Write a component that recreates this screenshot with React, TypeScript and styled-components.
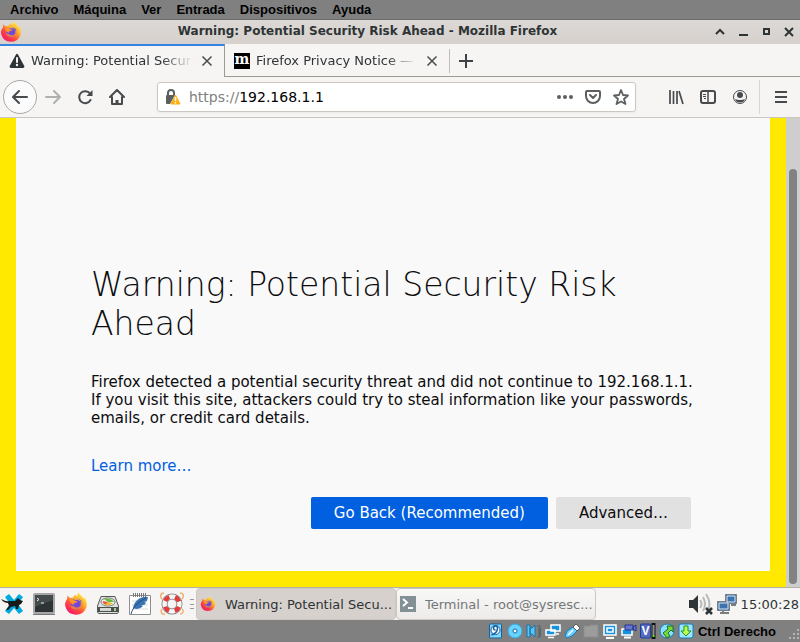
import React from 'react';
import styled, { createGlobalStyle } from 'styled-components';

const GlobalStyle = createGlobalStyle`
  *, *::before, *::after { box-sizing: border-box; }
  body { margin: 0; font-family: "DejaVu Sans", sans-serif; }
  button, input { font: inherit; color: inherit; margin: 0; }
  button { border: 0; padding: 0; background: none; cursor: pointer; }
  svg { display: block; flex: none; }
  h1, p { margin: 0; }
`;

const Screen = styled.div`
  min-height: 100vh;
  display: flex;
  flex-direction: column;
  background: #808080;
`;

/* Virtual machine menu */
const HostMenu = styled.nav`
  display: flex;
  gap: 15px;
  height: 20px;
  padding: 0 10px;
  align-items: center;
  border-bottom: 1px solid #6d6b6a;
  font: bold 13px "Liberation Sans", sans-serif;
`;
const HostMenuItem = styled.button`
  line-height: 18px;
`;

/* Window title */
const TitleBar = styled.header`
  display: flex;
  align-items: center;
  height: 24px;
  padding-right: 4px;
  background: linear-gradient(#dcd8d5, #d6d1cd);
  color: #2e3436;
`;
const WindowTitle = styled.div`
  flex: 1;
  text-align: center;
  font-size: 12px;
  line-height: 20px;
  font-weight: bold;
  padding-bottom: 2px;
  white-space: nowrap;
`;
const WindowControls = styled.div`
  display: flex;
  gap: 9px;
`;
const WindowButton = styled.button`
  width: 14px;
  height: 14px;
`;

/* Tabs */
const TabStrip = styled.div`
  display: flex;
  height: 33px;
  background: #f6f5f4;
  box-shadow: inset 0 -1px #9b9b92;
  color: #2e3436;
`;
const TabBox = styled.div<{ $active?: boolean }>`
  flex: 0 1 ${p => (p.$active ? '225px' : '224px')};
  min-width: 0;
  display: flex;
  align-items: center;
  gap: 6px;
  padding: 0 9px 2px;
  border-top: ${p => (p.$active ? '2px solid #3584e4' : '2px solid transparent')};
  border-right: ${p => (p.$active ? '1px solid #9b9b92' : '0')};
  background: ${p => (p.$active ? '#f6f5f4' : 'transparent')};
`;
const TabLabel = styled.button`
  flex: 1;
  min-width: 0;
  overflow: hidden;
  white-space: nowrap;
  text-align: left;
  font-size: 13px;
  line-height: 20px;
  mask-image: linear-gradient(to left, transparent, #000 32px);
`;
const NewTab = styled.button`
  margin: 5px 0 4px;
  padding: 0 8px;
  border-left: 1px solid #bdbcb9;
`;
const MozillaMark = styled.span`
  flex: none;
  width: 16px;
  height: 16px;
  background: #000;
  color: #fff;
  text-align: center;
  font: bold 14px/13px "DejaVu Serif", serif;
`;

/* Navigation */
const NavBar = styled.div`
  display: flex;
  align-items: center;
  height: 41px;
  padding: 0 11px 0 3px;
  background: #f6f5f4;
  border-bottom: 1px solid #c9c5c1;
  color: #474b4d;
`;
const BackButton = styled.button`
  width: 34px;
  height: 34px;
  border: 1px solid #aaa7a4;
  border-radius: 50%;
  background: #fbfbfb;
  display: grid;
  place-items: center;
`;
const ToolButton = styled.button<{ $faded?: boolean }>`
  width: 32px;
  height: 32px;
  display: grid;
  place-items: center;
  opacity: ${p => (p.$faded ? 0.4 : 1)};
`;
const AddressBar = styled.div`
  flex: 1;
  min-width: 0;
  height: 30px;
  margin: 0 24px;
  padding: 0 0 0 7px;
  display: flex;
  align-items: center;
  border: 1px solid #cdc7c2;
  border-radius: 3px;
  background: #fff;
  box-shadow: 0 1px 3px #0000000d;
  font-size: 14px;
`;
const Scheme = styled.label`
  margin-left: 8px;
  color: #808080;
`;
const AddressInput = styled.input`
  flex: 1;
  min-width: 0;
  border: 0;
  padding: 0;
  outline: 0;
  color: #000;
  background: transparent;
`;
const AddressButton = styled.button`
  width: 28px;
  height: 28px;
  display: grid;
  place-items: center;
  color: #5c5f60;
`;
const MenuButton = styled.button`
  margin-left: 3px;
  padding-left: 13px;
  height: 34px;
  display: flex;
  align-items: center;
  border-left: 1px solid #d6d5d4;
`;

/* Page */
const Viewport = styled.main`
  flex: 1;
  display: flex;
  background: #ffe900;
`;
const Page = styled.section`
  flex: 1;
  margin: 0 16px 16px;
  padding: 147px 75px 42px;
  background: #f9f9fa;
  color: #0c0c0d;
  font-size: 15px;
  line-height: 18px;
`;
const Heading = styled.h1`
  font-size: 33px;
  line-height: 39px;
  font-weight: 200;
`;
const Message = styled.p`
  margin: 30px 0;
`;
const LearnMore = styled.a`
  color: #0060df;
  text-decoration: none;
`;
const Actions = styled.div`
  display: flex;
  justify-content: flex-end;
  gap: 8px;
  margin-top: 22px;
  padding-right: 4px;
`;
const ActionButton = styled.button<{ $primary?: boolean }>`
  height: 32px;
  padding: 0 23px;
  border-radius: 2px;
  background: ${p => (p.$primary ? '#0060df' : '#e1e1e2')};
  color: ${p => (p.$primary ? '#fff' : '#0c0c0d')};
`;
const ScrollTrack = styled.div`
  width: 14px;
  padding: 51px 3px 3px;
  display: flex;
  background: #cecece;
`;
const ScrollThumb = styled.div`
  flex: 1;
  border-radius: 4px;
  background: #7f8382;
`;

/* Desktop panel */
const Panel = styled.footer`
  display: flex;
  align-items: center;
  height: 33px;
  border-top: 1px solid #b5b1a5;
  background: #f6f5f4;
  color: #2e3436;
`;
const Launchers = styled.div`
  display: flex;
  gap: 8px;
`;
const Launcher = styled.button`
  width: 24px;
  height: 24px;
`;
const Grip = styled.div`
  width: 4px;
  height: 10px;
  margin: 0 2px 0 6px;
  border: solid #97999a;
  border-width: 1px 0;
  background: linear-gradient(#97999a, #97999a) center / 4px 1px no-repeat;
`;
const Task = styled.button<{ $active?: boolean }>`
  flex: 0 1 200px;
  min-width: 0;
  height: 32px;
  display: flex;
  align-items: center;
  gap: 9px;
  padding: 0 3px;
  border: 1px solid #cdc7c2;
  border-radius: 4px;
  background: ${p => (p.$active ? '#d6d1cd' : 'linear-gradient(#f8f8f7, #edebe9)')};
  color: ${p => (p.$active ? '#2e3436' : '#747778')};
  font-size: 13px;
`;
const TaskLabel = styled.span`
  overflow: hidden;
  white-space: nowrap;
`;
const Tray = styled.div`
  margin-left: auto;
  padding-right: 1px;
  display: flex;
  align-items: center;
  gap: 3px;
  font-size: 13px;
`;

/* Virtual machine status */
const HostStatus = styled.div`
  display: flex;
  align-items: center;
  justify-content: flex-end;
  gap: 3px;
  height: 22px;
  font: bold 13px "Liberation Sans", sans-serif;
`;
const HostKey = styled.span`
  margin: 0 7px 0 1px;
`;

const FirefoxIcon = ({ size = 24 }: { size?: number }) => (
  <svg width={size} height={size} viewBox="0 0 24 24" aria-hidden="true">
    <defs>
      <linearGradient id="flame" x1=".85" y1=".1" x2=".2" y2=".95">
        <stop offset="0" stopColor="#fff44f" /><stop offset=".35" stopColor="#ffab25" />
        <stop offset=".65" stopColor="#ff4a3d" /><stop offset="1" stopColor="#f5156c" />
      </linearGradient>
      <linearGradient id="tail" x1="0" y1="0" x2="0" y2="1">
        <stop offset="0" stopColor="#ffdf3a" /><stop offset="1" stopColor="#ff7a30" />
      </linearGradient>
      <radialGradient id="globe"><stop offset="0" stopColor="#9059ff" /><stop offset="1" stopColor="#5b4ccc" /></radialGradient>
    </defs>
    <path fill="url(#flame)" d="M3.2 7 3.5 3.5 6 6l3-.5C10 3.5 11 3 12 2.700l.6 2.100C14 3 13.500 1.500 14.500.4c1 2.600 3.400 3 5.200 6l1-.9c2 3.200 2.700 6.700 1.600 10A11 11 0 0 1 1.500 15C.6 12 1.200 9.600 3.200 7Z" />
    <circle cx="12.5" cy="12" r="5.7" fill="url(#globe)" />
    <path fill="url(#tail)" d="M14.5.4c.7 3.4 5.3 5.1 5 10.7-.2 4-3.3 6.6-6.9 6.6-3.4 0-5.8-1.8-6.3-4.8 2.1 1.8 4.5 1.6 5.5-.1l-3-.9c-1.3-.5-1.4-1.5-.8-2.6 1-1 2-.6 2.9-.8-.6-1.1-2-1.6-4.3-1.3C7.7 5.8 10.6 5.1 13 6.1c3 1.2 4 3.3 3.6 5.2C18.7 8.6 16.9 5.7 15 4c-.9-1.1-1-2.3-.5-3.6Z" opacity=".85" />
    <circle cx="12.9" cy="11.7" r="3.8" fill="#7148d8" />
    <path fill="#ff932e" d="M5.2 7.1c2.3-.5 4.2.2 5.5 1.8l2.700.3c0 1.200-1.500 1.500-3.100 2.100-.8.3-.7 1.200-.1 1.700-2.800-.4-4.800-2.700-5-5.900Z" />
  </svg>
);

const Close = () => (
  <svg width="16" height="16" viewBox="0 0 16 16" fill="none" stroke="#484c4e" strokeWidth="1.5"><path d="m3.5 3.5 9 9m0-9-9 9" /></svg>
);

const TerminalMini = () => (
  <svg width="16" height="16" viewBox="0 0 16 16"><path fill="#839197" d="M0 0h16v16H0z" /><path d="m3 3 4 3.500L3 10m5 2h5" fill="none" stroke="#fff" strokeWidth="2" /></svg>
);

const Tab = ({ active, icon, title }: { active?: boolean; icon: React.ReactNode; title: string }) => (
  <TabBox $active={active}>
    {icon}
    <TabLabel>{title}</TabLabel>
    <button aria-label={`Close ${title}`}><Close /></button>
  </TabBox>
);

const launchers = [
  { name: 'Applications', art: (
    <svg width="24" height="24" viewBox="0 0 24 24"><path fill="#00a9e0" d="m5 5 4-3 5 6 5-6 4 3-5 7 5 7-4 3-5-6-5 6-4-3 5-7Z" /><path fill="#171a1b" d="M1 7c3 1 5 3 8 2h6l3-3 2 2 3 1-2 3-2 1-1 4h-2l-1-3-4 1-3 3H6l3-4-1-3c-2 0-5-1-7-4Z" /></svg>
  ) },
  { name: 'Terminal', art: (
    <svg width="24" height="24" viewBox="0 0 24 24"><rect x="2" y="2" width="20" height="19" rx="1" fill="#2e3435" stroke="#a6a6a6" strokeWidth="2" /><path fill="#444b4d" d="M3 3h18v5L3 15Z" /><path d="m5 6 2 1.500L5 9m4 2h3" stroke="#eee" fill="none" /><path d="M1 22.500h22" stroke="#777" /></svg>
  ) },
  { name: 'Firefox', art: <FirefoxIcon /> },
  { name: 'Disk usage', art: (
    <svg width="24" height="24" viewBox="0 0 24 24"><path fill="#dfe1df" stroke="#555a57" d="M5 4.500h14L22.500 14v6l-1 1.500h-19l-1-1.500v-6Z" /><path fill="#4a504d" d="M2 15h20v5H2Z" /><path fill="#d6d8d5" d="M4 16h11v3H4z" /><ellipse cx="12" cy="10" rx="7" ry="4" fill="#f9f9f7" stroke="#777d79" /><path fill="#65bb3c" d="M12 10 8 7c3-1 9 0 10 3Z" /><path fill="#e85937" d="m12 10-5-1c-1 1 0 3 3 4Z" /><path fill="#f3b63c" d="m12 10-3 3c3 1 6 0 8-2Z" /><path fill="#a9c99b" d="M18 16h2v3h-2z" /></svg>
  ) },
  { name: 'Text editor', art: (
    <svg width="24" height="24" viewBox="0 0 24 24"><path fill="#fff" stroke="#8e9090" d="M1.500 3.500h21v19h-21Z" /><path d="M5.500 1v4m2-4v4m2-4v4m2-4v4m2-4v4m2-4v4m2-4v4" stroke="#777" /><path d="M4 9h15M4 13h16M4 17h16" stroke="#d7dcdf" /><path fill="#3974b0" d="M20 5c-6-1-13 2-15 11l3 1c3 0 5-1 7-3l-2-.5 4-1 1-2-2-.5 3-1Z" /><path d="M3 22c2-7 7-12 15-16" fill="none" stroke="#244d7e" /></svg>
  ) },
  { name: 'Help', art: (
    <svg width="24" height="24" viewBox="0 0 24 24"><g fill="none"><path d="M4 1C0 1 0 5 2 7m18-6c4 0 4 4 2 6M2 17c-2 3 0 6 3 5m15 0c3 0 4-3 2-5" stroke="#edb273" strokeWidth="1.5" /><circle cx="12" cy="12" r="7.5" stroke="#777" strokeWidth="6" /><circle cx="12" cy="12" r="7.5" stroke="#f6f6f4" strokeWidth="4.500" /><circle cx="12" cy="12" r="7.5" stroke="#e13b3b" strokeWidth="4.500" strokeDasharray="5.890 5.890" strokeDashoffset="-2.950" /></g></svg>
  ) },
];

const blue = '#1593df';
const statusArt = [
  <><rect x="1.5" y="1" width="12" height="14" rx="1" fill="#80d8ff" stroke="#155fa0" /><circle cx="7.5" cy="7" r="4.5" fill="#fff" stroke="#155fa0" /><path d="M7.5 7a2 2 0 1 1 2-2c0 4-3 6-6 7" fill="none" stroke="#155fa0" strokeWidth="1.5" /></>,
  <><circle cx="8" cy="8" r="7" fill="#68d3ff" stroke="#35a6e0" /><circle cx="8" cy="8" r="2" fill="#fff" stroke="#0c67a4" /></>,
  <><path fill="#55c7fa" stroke="#1c72a9" d="M1 2h3v12H1zM4 5h2l3-3v12l-3-3H4z" /><path d="M11 3h3v11h-3m1-8h3m-3 2h3m-3 2h3m-3 2h3" fill="none" stroke="#555f63" /></>,
  <><path fill={blue} stroke="#fff" strokeWidth="1.5" d="M6 2h9v6H6zM1 7h9v5H1z" /><path d="M11 11h3M3 14.500h6" stroke="#fff" strokeWidth="1.5" /></>,
  <><path fill="#67ceff" stroke="#147bbd" d="m9 4 4 4-5 5-5 2-2-2 2-5Z" /><path fill="#fff" stroke="#444" strokeWidth=".8" d="m9 4 3-3 4 4-3 3Z" /><path d="m4 12 5-5" stroke="#fff" strokeWidth="1.5" /></>,
  <path fill="#9c9c9c" stroke="#8b8b8b" d="M1 3h6l1-1h7v12H1Z" />,
  <><path fill={blue} stroke="#fff" strokeWidth="1.5" d="M2 2h12v10H2Z" /><path d="M5 5h6v4H5Z" fill="none" stroke="#fff" strokeWidth="1.5" /><path d="M4 15h8" stroke="#fff" strokeWidth="2" /></>,
  <><path fill={blue} stroke="#fff" strokeWidth="1.5" d="M1 6h10v6H1Z" /><path d="M3 14.500h7" stroke="#fff" strokeWidth="2" /><path fill="#6974cd" stroke="#24368f" d="M4 2h8v5H4Zm8 2 3-2v6l-3-2Z" /></>,
  <><rect x="0.5" y="1" width="10" height="14" rx="1" fill="#526bc1" stroke="#253e91" /><text x="5.5" y="12" textAnchor="middle" fontSize="12" fill="#fff">V</text><path d="M13.5 0v16" stroke="#111" strokeWidth="4" /><path d="M13.5 2v10" stroke="#929292" strokeWidth="2" /><path d="M13.5 12v2" stroke="#56ee12" strokeWidth="2" /></>,
  <><circle cx="8" cy="8" r="7" fill="#8ae0ff" stroke="#197cae" /><path fill="#79d735" stroke="#18732b" d="M8 3h6v6l-2-2-3 3 2 3-3 2-4-5 5-4Z" /></>,
  <><rect x="1" y="1" width="14" height="14" rx="2" fill="#9de5ff" stroke="#127db8" /><path fill="#b7ff50" stroke="#279022" d="M6 3h4v5h3l-5 5-5-5h3Z" /></>,
];

export default function App() {
  return (
    <Screen>
      <GlobalStyle />
      <HostMenu>
        {['Archivo', 'Máquina', 'Ver', 'Entrada', 'Dispositivos', 'Ayuda'].map(name => <HostMenuItem key={name}>{name}</HostMenuItem>)}
      </HostMenu>
      <TitleBar>
        <FirefoxIcon size={22} />
        <WindowTitle>Warning: Potential Security Risk Ahead - Mozilla Firefox</WindowTitle>
        <WindowControls>
          {['m3 9 4-4 4 4', 'M3 10h9', 'M5 4h5v5H5Z', 'm3 3 8 8m0-8-8 8'].map((d, i) => (
            <WindowButton key={d} aria-label={['Shade', 'Minimize', 'Maximize', 'Close window'][i]}>
              <svg width="14" height="14" viewBox="0 0 14 14" fill="none" stroke="#2e3436" strokeWidth="2"><path d={d} /></svg>
            </WindowButton>
          ))}
        </WindowControls>
      </TitleBar>
      <TabStrip>
        <Tab active title="Warning: Potential Security Risk Ahead" icon={
          <svg width="16" height="16" viewBox="0 0 16 16"><path fill="#2e3436" d="M7 1.5a1.2 1.2 0 0 1 2 0l6 11A1.5 1.5 0 0 1 13.7 15H2.3A1.5 1.5 0 0 1 1 12.5Z" /><path d="M8 5v4" stroke="#f6f5f4" strokeWidth="2" strokeLinecap="round" /><circle cx="8" cy="12" r="1.2" fill="#f6f5f4" /></svg>
        } />
        <Tab title="Firefox Privacy Notice — Mozilla" icon={<MozillaMark aria-hidden="true">m</MozillaMark>} />
        <NewTab aria-label="New tab"><svg width="16" height="16" viewBox="0 0 16 16" stroke="#3e4345" strokeWidth="2"><path d="M8 1v14M1 8h14" /></svg></NewTab>
      </TabStrip>
      <NavBar>
        <BackButton aria-label="Back"><svg width="16" height="16" viewBox="0 0 16 16" fill="none" stroke="#474b4d" strokeWidth="2" strokeLinecap="round" strokeLinejoin="round"><path d="M15 8H1m6-6L1 8l6 6" /></svg></BackButton>
        <ToolButton $faded aria-label="Forward"><svg width="16" height="16" viewBox="0 0 16 16" fill="none" stroke="currentColor" strokeWidth="2" strokeLinecap="round" strokeLinejoin="round"><path d="M1 8h14M9 2l6 6-6 6" /></svg></ToolButton>
        <ToolButton aria-label="Reload"><svg width="16" height="16" viewBox="0 0 16 16" fill="none" stroke="currentColor" strokeWidth="2"><path d="M13 4.5A6 6 0 1 0 13.5 11" strokeLinecap="round" /><path fill="currentColor" stroke="none" d="M15.5 1v6h-6Z" /></svg></ToolButton>
        <ToolButton aria-label="Home"><svg width="16" height="16" viewBox="0 0 16 16" fill="none" stroke="currentColor" strokeWidth="2" strokeLinecap="round" strokeLinejoin="round"><path d="m1 8 7-7 7 7M3 8v7h10V8" /><path d="M8 15v-4" strokeWidth="3" strokeLinecap="butt" /></svg></ToolButton>
        <AddressBar>
          <svg width="16" height="16" viewBox="0 0 16 16"><path d="M3 7V4a3 3 0 0 1 6 0v2" fill="none" stroke="#5b5f60" strokeWidth="2" /><path fill="#5b5f60" d="M2 6h8l-5 9H2a1 1 0 0 1-1-1V7a1 1 0 0 1 1-1Z" /><path fill="#ffad0d" stroke="#ffad0d" strokeLinejoin="round" d="m10.5 6 4.500 9H6Z" /><path d="M10.5 8v4m0 1v1.5" stroke="#fff" strokeWidth="1.5" /></svg>
          <Scheme htmlFor="address">https://</Scheme>
          <AddressInput id="address" defaultValue="192.168.1.1" />
          <AddressButton aria-label="Page actions"><svg width="16" height="16" viewBox="0 0 16 16" fill="currentColor"><circle cx="2" cy="8" r="2" /><circle cx="8" cy="8" r="2" /><circle cx="14" cy="8" r="2" /></svg></AddressButton>
          <AddressButton aria-label="Save to Pocket"><svg width="16" height="16" viewBox="0 0 16 16" fill="none" stroke="currentColor" strokeWidth="2" strokeLinejoin="round" strokeLinecap="round"><path d="M2 2h12q1 0 1 1v4A7 7 0 0 1 1 7V3q0-1 1-1Zm3 4 3 3 3-3" /></svg></AddressButton>
          <AddressButton aria-label="Bookmark"><svg width="16" height="16" viewBox="0 0 16 16" fill="none" stroke="currentColor" strokeWidth="1.8" strokeLinejoin="round"><path d="m8 1 2 5 5 .5-4 3.500 1.500 5L8 12.500 3.500 15 5 10 1 6.500 6 6Z" /></svg></AddressButton>
        </AddressBar>
        <ToolButton aria-label="Library"><svg width="16" height="16" viewBox="0 0 16 16" fill="none" stroke="currentColor" strokeWidth="2"><path d="M2 1v14M5.500 2v13M9 2v13" strokeWidth="1.700" /><path d="m11 2 4 13" strokeWidth="1.700" /></svg></ToolButton>
        <ToolButton aria-label="Sidebars"><svg width="16" height="16" viewBox="0 0 16 16" fill="none" stroke="currentColor" strokeWidth="2"><rect x="1" y="2" width="14" height="12" rx="2" /><path d="M8 2v12" strokeWidth="1.500" /><path d="M3 5.500h3M3 7.500h3M4 9.500h2" strokeWidth="1" /></svg></ToolButton>
        <ToolButton aria-label="Account"><svg width="16" height="16" viewBox="0 0 16 16"><circle cx="8" cy="8" r="6.500" fill="none" stroke="currentColor" /><circle cx="8" cy="6" r="3" fill="currentColor" /><path fill="currentColor" d="M3 10q2 1 5 1t5-1q-1 3.500-5 3.500T3 10Z" /></svg></ToolButton>
        <MenuButton aria-label="Open menu"><svg width="16" height="16" viewBox="0 0 16 16" stroke="currentColor" strokeWidth="2"><path d="M2 3h12M2 8h12M2 13h12" /></svg></MenuButton>
      </NavBar>
      <Viewport>
        <Page>
          <Heading>Warning: Potential Security Risk Ahead</Heading>
          <Message>Firefox detected a potential security threat and did not continue to 192.168.1.1. If you visit this site, attackers could try to steal information like your passwords, emails, or credit card details.</Message>
          <LearnMore href="#">Learn more…</LearnMore>
          <Actions>
            <ActionButton $primary>Go Back (Recommended)</ActionButton>
            <ActionButton>Advanced…</ActionButton>
          </Actions>
        </Page>
        <ScrollTrack><ScrollThumb /></ScrollTrack>
      </Viewport>
      <Panel>
        <Launchers>{launchers.map(item => <Launcher key={item.name} aria-label={item.name}>{item.art}</Launcher>)}</Launchers>
        <Grip />
        <Task $active><FirefoxIcon size={16} /><TaskLabel>Warning: Potential Secu...</TaskLabel></Task>
        <Task><TerminalMini /><TaskLabel>Terminal - root@sysresc...</TaskLabel></Task>
        <Tray>
          <svg width="24" height="24" viewBox="0 0 24 24"><path fill="#2e3436" d="M0 8h4l5-5v18l-5-5H0Z" /><path d="M11 8q3 4 0 8m3-11q4 7 0 14m3-17q7 10 0 20" fill="none" stroke="#b8baba" strokeWidth="2" /><path d="m17 16 6 6m0-6-6 6" stroke="#2e3436" strokeWidth="2.5" /></svg>
          <svg width="22" height="24" viewBox="0 0 22 24"><g fill="#3d73ac" stroke="#777d82"><path d="M9.5 2.5h11v9h-11Z" /><path d="M1.5 9.5h12v9h-12Z" /></g><path d="M11 4h8v6h-8ZM3 11h9v6H3Z" fill="none" stroke="#d9e6ef" /><path d="M15 13h5M4 21h9m-6-2v3" stroke="#7a7d80" strokeWidth="2" /></svg>
          <time>15:00:28</time>
        </Tray>
      </Panel>
      <HostStatus>
        {statusArt.map((art, i) => <svg key={i} width="16" height="16" viewBox="0 0 16 16" aria-hidden="true">{art}</svg>)}
        <HostKey>Ctrl Derecho</HostKey>
        <svg width="14" height="20" viewBox="0 0 14 20" fill="#b5b5b5"><path d="M11 8h2v2h-2zM7 12h2v2H7zm4 0h2v2h-2zM3 16h2v2H3zm4 0h2v2H7zm4 0h2v2h-2z" /></svg>
      </HostStatus>
    </Screen>
  );
}
